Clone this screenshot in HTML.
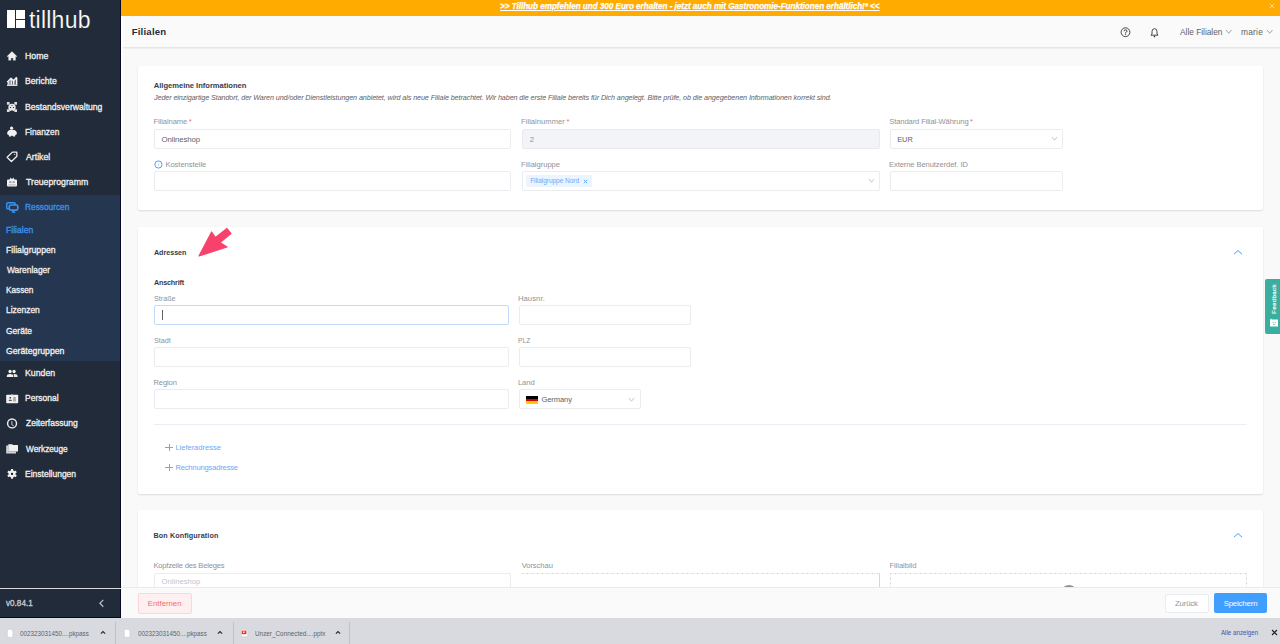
<!DOCTYPE html>
<html><head><meta charset="utf-8">
<style>
*{box-sizing:border-box;margin:0;padding:0}
html,body{width:1280px;height:644px;overflow:hidden;background:#f9f9f9;font-family:"Liberation Sans",sans-serif;position:relative}
.a{position:absolute}
.t{position:absolute;line-height:1;white-space:nowrap}
svg.a{overflow:visible}
</style></head><body>
<div class="a" style="left:0px;top:0px;width:121px;height:618px;background:#222b39"></div>
<div class="a" style="left:120px;top:0px;width:1px;height:618px;background:#050a22"></div>
<div class="a" style="left:0px;top:195px;width:120px;height:166px;background:#253750"></div>
<div class="a" style="left:0px;top:588px;width:121px;height:1px;background:#d8dadf"></div>
<div class="a" style="left:0px;top:589px;width:120px;height:28px;background:#222b39"></div>
<div class="a" style="left:0px;top:617px;width:121px;height:1px;background:#050a22"></div>
<div class="a" style="left:121px;top:0px;width:1159px;height:16px;background:#ffab00"></div>
<div class="a" style="left:121px;top:16px;width:1159px;height:31px;background:#fafafa"></div>
<div class="a" style="left:121px;top:47px;width:1159px;height:1px;background:#e6e6e6"></div>
<div class="a" style="left:121px;top:48px;width:1159px;height:1px;background:#efefef"></div>
<div class="a" style="left:121px;top:16px;width:2px;height:602px;background:#fdfdfd"></div>
<div class="a" style="left:7px;top:10px;width:8px;height:18px;background:#fff"></div>
<div class="a" style="left:16px;top:10px;width:8.5px;height:8.75px;background:#fff"></div>
<div class="a" style="left:16px;top:20px;width:8.5px;height:8px;background:#fff"></div>
<div class="t" style="left:28.95px;top:9.00px;font-size:23px;color:#fff;letter-spacing:0.237px;-webkit-text-stroke:0.2px #222b39;">tillhub</div>
<div class="t" style="left:25.13px;top:51.90px;font-size:9.2px;color:#f0f0f0;transform:scaleX(0.9539);transform-origin:0 0;-webkit-text-stroke:0.32px #f0f0f0;">Home</div>
<div class="t" style="left:25.14px;top:76.90px;font-size:9.2px;color:#f0f0f0;transform:scaleX(0.9421);transform-origin:0 0;-webkit-text-stroke:0.32px #f0f0f0;">Berichte</div>
<div class="t" style="left:25.14px;top:102.90px;font-size:9.2px;color:#f0f0f0;transform:scaleX(0.9349);transform-origin:0 0;-webkit-text-stroke:0.32px #f0f0f0;">Bestandsverwaltung</div>
<div class="t" style="left:25.17px;top:127.90px;font-size:9.2px;color:#f0f0f0;transform:scaleX(0.9070);transform-origin:0 0;-webkit-text-stroke:0.32px #f0f0f0;">Finanzen</div>
<div class="t" style="left:25.83px;top:152.90px;font-size:9.2px;color:#f0f0f0;transform:scaleX(0.9508);transform-origin:0 0;-webkit-text-stroke:0.32px #f0f0f0;">Artikel</div>
<div class="t" style="left:25.65px;top:177.90px;font-size:9.2px;color:#f0f0f0;transform:scaleX(0.9491);transform-origin:0 0;-webkit-text-stroke:0.32px #f0f0f0;">Treueprogramm</div>
<div class="t" style="left:25.17px;top:202.90px;font-size:9.2px;color:#3a93ee;transform:scaleX(0.9049);transform-origin:0 0;-webkit-text-stroke:0.32px #3a93ee;">Ressourcen</div>
<div class="t" style="left:6.04px;top:225.90px;font-size:9.2px;color:#3a93ee;transform:scaleX(0.9355);transform-origin:0 0;-webkit-text-stroke:0.32px #3a93ee;">Filialen</div>
<div class="t" style="left:6.04px;top:245.90px;font-size:9.2px;color:#f0f0f0;transform:scaleX(0.9430);transform-origin:0 0;-webkit-text-stroke:0.32px #f0f0f0;">Filialgruppen</div>
<div class="t" style="left:6.71px;top:265.90px;font-size:9.2px;color:#f0f0f0;transform:scaleX(0.9124);transform-origin:0 0;-webkit-text-stroke:0.32px #f0f0f0;">Warenlager</div>
<div class="t" style="left:6.08px;top:285.90px;font-size:9.2px;color:#f0f0f0;transform:scaleX(0.8932);transform-origin:0 0;-webkit-text-stroke:0.32px #f0f0f0;">Kassen</div>
<div class="t" style="left:6.06px;top:305.90px;font-size:9.2px;color:#f0f0f0;transform:scaleX(0.9190);transform-origin:0 0;-webkit-text-stroke:0.32px #f0f0f0;">Lizenzen</div>
<div class="t" style="left:6.32px;top:326.90px;font-size:9.2px;color:#f0f0f0;transform:scaleX(0.9246);transform-origin:0 0;-webkit-text-stroke:0.32px #f0f0f0;">Geräte</div>
<div class="t" style="left:6.31px;top:346.90px;font-size:9.2px;color:#f0f0f0;transform:scaleX(0.9453);transform-origin:0 0;-webkit-text-stroke:0.32px #f0f0f0;">Gerätegruppen</div>
<div class="t" style="left:25.33px;top:368.90px;font-size:9.2px;color:#f0f0f0;transform:scaleX(0.9517);transform-origin:0 0;-webkit-text-stroke:0.32px #f0f0f0;">Kunden</div>
<div class="t" style="left:25.35px;top:393.90px;font-size:9.2px;color:#f0f0f0;transform:scaleX(0.9244);transform-origin:0 0;-webkit-text-stroke:0.32px #f0f0f0;">Personal</div>
<div class="t" style="left:25.78px;top:418.90px;font-size:9.2px;color:#f0f0f0;transform:scaleX(0.9279);transform-origin:0 0;-webkit-text-stroke:0.32px #f0f0f0;">Zeiterfassung</div>
<div class="t" style="left:26.01px;top:444.90px;font-size:9.2px;color:#f0f0f0;transform:scaleX(0.8995);transform-origin:0 0;-webkit-text-stroke:0.32px #f0f0f0;">Werkzeuge</div>
<div class="t" style="left:25.35px;top:469.90px;font-size:9.2px;color:#f0f0f0;transform:scaleX(0.9260);transform-origin:0 0;-webkit-text-stroke:0.32px #f0f0f0;">Einstellungen</div>
<div class="t" style="left:5.82px;top:599.20px;font-size:8.6px;color:#c9cdd3;transform:scaleX(0.9474);transform-origin:0 0;-webkit-text-stroke:0.32px #c9cdd3;">v0.84.1</div>
<div class="t" style="left:131.66px;top:27.20px;font-size:9.6px;color:#1f2d3d;font-weight:bold;letter-spacing:0.209px;">Filialen</div>
<div class="t" style="left:1180.08px;top:28.30px;font-size:8.4px;color:#606266;letter-spacing:-0.041px;">Alle Filialen</div>
<div class="t" style="left:1240.94px;top:28.30px;font-size:8.4px;color:#606266;letter-spacing:0.232px;">marie</div>
<div class="t" style="left:500.10px;top:2.90px;font-size:8.2px;color:#fff;font-weight:bold;font-style:italic;letter-spacing:-0.063px;text-decoration:underline;-webkit-text-stroke:0.25px #fff;text-underline-offset:1px;">&gt;&gt; Tillhub empfehlen und 300 Euro erhalten - jetzt auch mit Gastronomie-Funktionen erhältlich!* &lt;&lt;</div>
<div class="a" style="left:138px;top:66px;width:1125px;height:144px;background:#fff;border-radius:2px;box-shadow:0 1px 2px rgba(0,0,0,0.12)"></div>
<div class="a" style="left:138px;top:227px;width:1125px;height:267px;background:#fff;border-radius:2px;box-shadow:0 1px 2px rgba(0,0,0,0.12)"></div>
<div class="a" style="left:138px;top:510px;width:1125px;height:120px;background:#fff;border-radius:2px;box-shadow:0 1px 2px rgba(0,0,0,0.12)"></div>
<div class="t" style="left:153.81px;top:82.20px;font-size:7.6px;color:#353d4b;font-weight:bold;letter-spacing:-0.029px;">Allgemeine Informationen</div>
<div class="t" style="left:154.02px;top:94.40px;font-size:7.2px;color:#606266;font-style:italic;letter-spacing:-0.091px;">Jeder einzigartige Standort, der Waren und/oder Dienstleistungen anbietet, wird als neue Filiale betrachtet. Wir haben die erste Filiale bereits für Dich angelegt. Bitte prüfe, ob die angegebenen Informationen korrekt sind.</div>
<div class="t" style="left:153.38px;top:118.20px;font-size:7.6px;color:#8f9298;letter-spacing:-0.075px;">Filialname</div>
<div class="t" style="left:188.78px;top:118.20px;font-size:7.6px;color:#f56c6c;">*</div>
<div class="a" style="left:154px;top:129px;width:357px;height:20px;background:#fff;border:1px solid #eaecf0;border-radius:2px"></div>
<div class="t" style="left:161.53px;top:136.10px;font-size:7.8px;color:#606266;letter-spacing:-0.085px;">Onlineshop</div>
<div class="t" style="left:521.08px;top:118.20px;font-size:7.6px;color:#8f9298;letter-spacing:0.023px;">Filialnummer</div>
<div class="t" style="left:566.58px;top:118.20px;font-size:7.6px;color:#f56c6c;">*</div>
<div class="a" style="left:522px;top:129px;width:358px;height:20px;background:#f2f4f8;border:1px solid #e8eaef;border-radius:2px"></div>
<div class="t" style="left:529.71px;top:136.10px;font-size:7.8px;color:#8f9298;">2</div>
<div class="t" style="left:889.25px;top:118.20px;font-size:7.6px;color:#8f9298;letter-spacing:-0.110px;">Standard Filial-Währung</div>
<div class="t" style="left:970.08px;top:118.20px;font-size:7.6px;color:#f56c6c;">*</div>
<div class="a" style="left:890px;top:129px;width:173px;height:20px;background:#fff;border:1px solid #eaecf0;border-radius:2px"></div>
<div class="t" style="left:897.19px;top:136.30px;font-size:7.4px;color:#606266;">EUR</div>
<svg class="a" style="left:153.5px;top:159.5px" width="9" height="9" viewBox="0 0 9 9"><circle cx="4.45" cy="4.5" r="3.6" fill="none" stroke="#3f9bfd" stroke-width="0.95"/><rect x="4.05" y="3.9" width="0.8" height="2.3" fill="#a9cffa"/><rect x="4.05" y="2.6" width="0.8" height="0.7" fill="#c5ddfb"/></svg>
<div class="t" style="left:165.38px;top:161.20px;font-size:7.6px;color:#8f9298;letter-spacing:-0.040px;">Kostenstelle</div>
<div class="a" style="left:154px;top:171px;width:357px;height:20px;background:#fff;border:1px solid #eaecf0;border-radius:2px"></div>
<div class="t" style="left:521.08px;top:161.20px;font-size:7.6px;color:#8f9298;letter-spacing:-0.030px;">Filialgruppe</div>
<div class="a" style="left:522px;top:171px;width:358px;height:20px;background:#fff;border:1px solid #eaecf0;border-radius:2px"></div>
<div class="a" style="left:526px;top:175px;width:66px;height:12px;background:#ecf5ff;border-radius:2px"></div>
<div class="t" style="left:530.16px;top:177.70px;font-size:6.6px;color:#6aaaf8;letter-spacing:-0.081px;">Filialgruppe Nord</div>
<div class="t" style="left:888.98px;top:161.20px;font-size:7.6px;color:#8f9298;letter-spacing:-0.097px;">Externe Benutzerdef. ID</div>
<div class="a" style="left:890px;top:171px;width:173px;height:20px;background:#fff;border:1px solid #eaecf0;border-radius:2px"></div>
<div class="t" style="left:153.92px;top:249.40px;font-size:7.2px;color:#353d4b;font-weight:bold;letter-spacing:-0.027px;">Adressen</div>
<div class="t" style="left:153.92px;top:279.40px;font-size:7.2px;color:#353d4b;font-weight:bold;letter-spacing:-0.167px;">Anschrift</div>
<div class="t" style="left:153.67px;top:295.20px;font-size:7.6px;color:#8f9298;transform:scaleX(0.9492);transform-origin:0 0;">Straße</div>
<div class="a" style="left:154px;top:305px;width:355px;height:20px;background:#fff;border:1px solid #c3dbfb;border-radius:2px"></div>
<div class="a" style="left:162px;top:310px;width:0.8px;height:10px;background:#606266"></div>
<div class="t" style="left:517.88px;top:295.20px;font-size:7.6px;color:#8f9298;letter-spacing:0.121px;">Hausnr.</div>
<div class="a" style="left:518.5px;top:305px;width:172.5px;height:20px;background:#fff;border:1px solid #eaecf0;border-radius:2px"></div>
<div class="t" style="left:153.67px;top:337.20px;font-size:7.6px;color:#8f9298;transform:scaleX(0.9513);transform-origin:0 0;">Stadt</div>
<div class="a" style="left:154px;top:347px;width:355px;height:20px;background:#fff;border:1px solid #eaecf0;border-radius:2px"></div>
<div class="t" style="left:517.95px;top:337.20px;font-size:7.6px;color:#8f9298;transform:scaleX(0.8794);transform-origin:0 0;">PLZ</div>
<div class="a" style="left:518.5px;top:347px;width:172.5px;height:20px;background:#fff;border:1px solid #eaecf0;border-radius:2px"></div>
<div class="t" style="left:153.38px;top:379.20px;font-size:7.6px;color:#8f9298;letter-spacing:-0.093px;">Region</div>
<div class="a" style="left:154px;top:389px;width:355px;height:20px;background:#fff;border:1px solid #eaecf0;border-radius:2px"></div>
<div class="t" style="left:517.88px;top:379.20px;font-size:7.6px;color:#8f9298;">Land</div>
<div class="a" style="left:518.5px;top:389px;width:122.5px;height:20px;background:#fff;border:1px solid #eaecf0;border-radius:2px"></div>
<div class="a" style="left:526px;top:396px;width:11.6px;height:2.7px;background:#000"></div>
<div class="a" style="left:526px;top:398.7px;width:11.6px;height:2.7px;background:#dd0000"></div>
<div class="a" style="left:526px;top:401.4px;width:11.6px;height:2.7px;background:#ffce00"></div>
<div class="t" style="left:541.42px;top:396.20px;font-size:7.6px;color:#606266;letter-spacing:-0.109px;">Germany</div>
<div class="a" style="left:154px;top:424px;width:1093px;height:1px;background:#ebeef5"></div>
<div class="t" style="left:175.38px;top:444.20px;font-size:7.6px;color:#6ea8f7;letter-spacing:-0.041px;">Lieferadresse</div>
<div class="t" style="left:175.38px;top:464.20px;font-size:7.6px;color:#6ea8f7;letter-spacing:-0.182px;">Rechnungsadresse</div>
<div class="a" style="left:165.3px;top:447.1px;width:7.5px;height:0.8px;background:#6ea8f7"></div>
<div class="a" style="left:168.65px;top:443.75px;width:0.8px;height:7.5px;background:#6ea8f7"></div>
<div class="a" style="left:165.3px;top:467.1px;width:7.5px;height:0.8px;background:#6ea8f7"></div>
<div class="a" style="left:168.65px;top:463.75px;width:0.8px;height:7.5px;background:#6ea8f7"></div>
<div class="t" style="left:153.52px;top:532.40px;font-size:7.2px;color:#353d4b;font-weight:bold;letter-spacing:0.109px;">Bon Konfiguration</div>
<div class="t" style="left:153.38px;top:562.20px;font-size:7.6px;color:#8f9298;letter-spacing:-0.195px;">Kopfzeile des Beleges</div>
<div class="a" style="left:154px;top:573px;width:357px;height:20px;background:#fff;border:1px solid #eaecf0;border-radius:2px"></div>
<div class="t" style="left:161.54px;top:578.20px;font-size:7.6px;color:#c0c4cc;letter-spacing:0.026px;">Onlineshop</div>
<div class="t" style="left:521.67px;top:562.20px;font-size:7.6px;color:#8f9298;letter-spacing:-0.064px;">Vorschau</div>
<div class="a" style="left:522px;top:573px;width:358px;height:30px;background:repeating-linear-gradient(90deg,#c9ccd2 0 1px,#eef0f3 1px 5px) top/100% 1px no-repeat;border-right:1px solid #d4d6da"></div>
<div class="t" style="left:889.38px;top:562.20px;font-size:7.6px;color:#8f9298;letter-spacing:-0.038px;">Filialbild</div>
<div class="a" style="left:890px;top:573px;width:357px;height:30px;background:repeating-linear-gradient(90deg,#c9ccd2 0 1px,#eef0f3 1px 5px) top/100% 1px no-repeat,repeating-linear-gradient(180deg,#c9ccd2 0 1px,#eef0f3 1px 5px) left/1px 100% no-repeat,repeating-linear-gradient(180deg,#c9ccd2 0 1px,#eef0f3 1px 5px) right/1px 100% no-repeat"></div>
<div class="a" style="left:1059.5px;top:585.2px;width:18px;height:18px;background:#8e9196;border-radius:50%"></div>
<svg class="a" style="left:1233px;top:248.6px" width="10" height="7" viewBox="0 0 10 7"><path d="M1 5.2 L5 1.5 L9 5.2" fill="none" stroke="#409eff" stroke-width="1"/></svg>
<svg class="a" style="left:1233px;top:532px" width="10" height="7" viewBox="0 0 10 7"><path d="M1 5.2 L5 1.5 L9 5.2" fill="none" stroke="#409eff" stroke-width="1"/></svg>
<svg class="a" style="left:190px;top:222px" width="50" height="40" viewBox="190 222 50 40"><path d="M199 256 L211.6 232 L215.5 237.5 L227 228.5 L231 233.5 L220 242.6 L227 247 Z" fill="#f8416b" stroke="#f8416b" stroke-width="1.2" stroke-linejoin="round"/></svg>
<div class="a" style="left:1264.8px;top:279px;width:15.2px;height:54.5px;background:#3aafa0;border-radius:2px 0 0 2px"></div>
<div class="a" style="left:1270px;top:313.8px;width:29px;height:8px;transform:rotate(-90deg);transform-origin:0 0;font-size:6.2px;line-height:8px;color:#fff;white-space:nowrap;letter-spacing:0.35px;-webkit-text-stroke:0.15px #fff">Feedback</div>
<svg class="a" style="left:1268.5px;top:317.6px" width="10" height="9" viewBox="0 0 10 9"><path d="M1 1.5 L2.5 0.5 L2.5 1.5 L9 1.5 L9 8.5 L1 8.5 Z" fill="#fff"/><circle cx="4" cy="4.6" r="0.5" fill="#3aafa0"/><circle cx="6.2" cy="4.6" r="0.5" fill="#3aafa0"/><path d="M3.8 6.2 Q5.1 7.2 6.4 6.2" stroke="#3aafa0" stroke-width="0.6" fill="none"/></svg>
<div class="a" style="left:121px;top:587px;width:1159px;height:31px;background:#fafafa;border-top:1px solid #ebebeb"></div>
<div class="a" style="left:138px;top:593px;width:54px;height:20.5px;background:#fef0f0;border:1px solid #fcd6d6;border-radius:2px"></div>
<div class="t" style="left:147.86px;top:600.10px;font-size:7.8px;color:#f56c6c;letter-spacing:-0.022px;">Entfernen</div>
<div class="a" style="left:1165px;top:593.5px;width:43.5px;height:19.5px;background:#fff;border:1px solid #eaecf0;border-radius:2px"></div>
<div class="t" style="left:1174.95px;top:600.10px;font-size:7.8px;color:#8f9298;letter-spacing:-0.160px;">Zurück</div>
<div class="a" style="left:1214px;top:593.3px;width:53px;height:19.7px;background:#409eff;border-radius:2px"></div>
<div class="t" style="left:1223.65px;top:600.10px;font-size:7.8px;color:#fff;letter-spacing:-0.158px;">Speichern</div>
<div class="a" style="left:0px;top:618px;width:1280px;height:26px;background:#d9dadf"></div>
<div class="a" style="left:114.7px;top:622px;width:0.8px;height:22px;background:#bfc1c6"></div>
<div class="a" style="left:232.5px;top:622px;width:0.8px;height:22px;background:#bfc1c6"></div>
<div class="a" style="left:349.4px;top:622px;width:0.8px;height:22px;background:#bfc1c6"></div>
<div class="t" style="left:20.35px;top:630.40px;font-size:7.2px;color:#5f6368;transform:scaleX(0.8746);transform-origin:0 0;">002323031450....pkpass</div>
<div class="t" style="left:137.55px;top:630.40px;font-size:7.2px;color:#5f6368;transform:scaleX(0.8746);transform-origin:0 0;">002323031450....pkpass</div>
<div class="t" style="left:254.51px;top:630.40px;font-size:7.2px;color:#5f6368;transform:scaleX(0.8859);transform-origin:0 0;">Unzer_Connected....pptx</div>
<svg class="a" style="left:7.1px;top:628.8px" width="6.2" height="8.6" viewBox="0 0 6.2 8.6"><path d="M0.3 0.3 L4.2 0.3 L5.9 2 L5.9 8.3 L0.3 8.3 Z" fill="#fff" stroke="#c4c5c9" stroke-width="0.5"/></svg>
<svg class="a" style="left:124.2px;top:628.8px" width="6.2" height="8.6" viewBox="0 0 6.2 8.6"><path d="M0.3 0.3 L4.2 0.3 L5.9 2 L5.9 8.3 L0.3 8.3 Z" fill="#fff" stroke="#c4c5c9" stroke-width="0.5"/></svg>
<svg class="a" style="left:241px;top:628.5px" width="7" height="8" viewBox="0 0 7 8"><path d="M0.3 0.3 L5 0.3 L6.7 2 L6.7 7.7 L0.3 7.7 Z" fill="#fff" stroke="#c4c5c9" stroke-width="0.5"/><rect x="0.8" y="1.6" width="4.6" height="3.6" fill="#e2352b"/><rect x="2" y="2.5" width="1.6" height="1.4" fill="#fff"/></svg>
<svg class="a" style="left:100.2px;top:630.2px" width="6" height="5" viewBox="0 0 6 5"><path d="M0.9 3.7 L3 1.6 L5.1 3.7" fill="none" stroke="#2a2a2a" stroke-width="1.2"/></svg>
<svg class="a" style="left:217.2px;top:630.2px" width="6" height="5" viewBox="0 0 6 5"><path d="M0.9 3.7 L3 1.6 L5.1 3.7" fill="none" stroke="#2a2a2a" stroke-width="1.2"/></svg>
<svg class="a" style="left:334.5px;top:630.2px" width="6" height="5" viewBox="0 0 6 5"><path d="M0.9 3.7 L3 1.6 L5.1 3.7" fill="none" stroke="#2a2a2a" stroke-width="1.2"/></svg>
<div class="t" style="left:1220.69px;top:629.70px;font-size:6.6px;color:#3a56b0;transform:scaleX(0.9365);transform-origin:0 0;">Alle anzeigen</div>
<svg class="a" style="left:1271px;top:629px" width="7" height="7" viewBox="0 0 7 7"><path d="M1 1 L6 6 M6 1 L1 6" stroke="#222" stroke-width="1.1"/></svg>
<svg class="a" style="left:1051.00px;top:136.40px" width="7.00" height="5.20" viewBox="0 0 7.00 5.20"><path d="M1 1 L3.50 4.20 L6.00 1" fill="none" stroke="#b4b8bf" stroke-width="0.8"/></svg>
<svg class="a" style="left:868.00px;top:178.40px" width="7.00" height="5.20" viewBox="0 0 7.00 5.20"><path d="M1 1 L3.50 4.20 L6.00 1" fill="none" stroke="#b4b8bf" stroke-width="0.8"/></svg>
<svg class="a" style="left:628.30px;top:396.60px" width="7.00" height="5.20" viewBox="0 0 7.00 5.20"><path d="M1 1 L3.50 4.20 L6.00 1" fill="none" stroke="#b4b8bf" stroke-width="0.8"/></svg>
<svg class="a" style="left:1225.05px;top:29.45px" width="7.50" height="5.30" viewBox="0 0 7.50 5.30"><path d="M1 1 L3.75 4.30 L6.50 1" fill="none" stroke="#8a8d93" stroke-width="0.8"/></svg>
<svg class="a" style="left:1265.55px;top:29.45px" width="7.50" height="5.30" viewBox="0 0 7.50 5.30"><path d="M1 1 L3.75 4.30 L6.50 1" fill="none" stroke="#8a8d93" stroke-width="0.8"/></svg>
<svg class="a" style="left:583px;top:179px" width="5" height="5" viewBox="0 0 5 5"><path d="M0.8 0.8 L4.2 4.2 M4.2 0.8 L0.8 4.2" stroke="#409eff" stroke-width="0.8"/></svg>
<svg class="a" style="left:1268.5px;top:3px" width="6" height="6" viewBox="0 0 6 6"><path d="M0.7 0.7 L5.3 5.3 M5.3 0.7 L0.7 5.3" stroke="#ffe2a8" stroke-width="0.9"/></svg>
<svg class="a" style="left:98px;top:599px" width="7" height="9" viewBox="0 0 7 9"><path d="M5.3 0.9 L1.9 4.3 L5.3 7.7" fill="none" stroke="#b8bcc4" stroke-width="1.25"/></svg>
<svg class="a" style="left:1120px;top:27px" width="11" height="11" viewBox="0 0 11 11"><circle cx="5.5" cy="5.2" r="4.4" fill="none" stroke="#333" stroke-width="0.9"/><path d="M4 4.2 Q4 2.8 5.5 2.8 Q7 2.8 7 4.1 Q7 5 5.6 5.6 L5.6 6.6" fill="none" stroke="#333" stroke-width="0.9"/><rect x="5.1" y="7.2" width="0.9" height="0.9" fill="#333"/></svg>
<svg class="a" style="left:1149px;top:27px" width="11" height="11" viewBox="0 0 11 11"><path d="M2 8.2 L9 8.2 L8 7 L8 4.6 Q8 1.8 5.5 1.6 Q3 1.8 3 4.6 L3 7 Z" fill="none" stroke="#333" stroke-width="0.9" stroke-linejoin="round"/><circle cx="5.5" cy="9.6" r="0.8" fill="#333"/></svg>
<svg class="a" style="left:4px;top:48px" width="16" height="16" viewBox="0 0 16 16"><path d="M7.95 3.6 L13.1 8.5 L11.5 8.5 L11.5 12.3 L9.2 12.3 L9.2 9.9 L6.9 9.9 L6.9 12.3 L4.6 12.3 L4.6 8.5 L2.9 8.5 Z" fill="#f0f0f0" stroke="#f0f0f0" stroke-width="0.3" stroke-linejoin="round"/></svg>
<svg class="a" style="left:4px;top:74px" width="16" height="16" viewBox="0 0 16 16"><rect x="3" y="10.5" width="10.4" height="1.4" fill="#f0f0f0"/><path d="M3.2 8.2 L7 4.4 L9.6 6.8 L12.7 3.3" fill="none" stroke="#f0f0f0" stroke-width="1.5" stroke-linejoin="round"/><path d="M3.2 8.2 L7 4.4 L9.6 6.8 L12.7 3.3 L13.3 3.3 L13.3 10.6 L3 10.6 Z" fill="#f0f0f0" opacity="0.35"/><rect x="4.2" y="7.6" width="1.3" height="3" fill="#f0f0f0"/><rect x="6.6" y="5" width="1.3" height="5.6" fill="#f0f0f0"/><rect x="9" y="6.5" width="1.3" height="4.1" fill="#f0f0f0"/><rect x="12" y="4" width="1.3" height="6.6" fill="#f0f0f0"/></svg>
<svg class="a" style="left:4px;top:99px" width="16" height="16" viewBox="0 0 16 16"><rect x="2.9" y="3" width="2.7" height="2.7" fill="#dcdcdc"/><rect x="10.3" y="3" width="2.7" height="2.7" fill="#dcdcdc"/><rect x="2.9" y="10.3" width="2.7" height="2.7" fill="#dcdcdc"/><rect x="10.3" y="10.3" width="2.7" height="2.7" fill="#dcdcdc"/><circle cx="8" cy="8.4" r="3.7" fill="#e8e8e8"/><circle cx="6.5" cy="8.5" r="0.6" fill="#111"/><circle cx="9.5" cy="8.5" r="0.6" fill="#111"/><ellipse cx="8" cy="6.3" rx="0.8" ry="0.45" fill="#222b39"/><path d="M6.6 12.3 Q8 11.2 9.4 12.3" fill="none" stroke="#222b39" stroke-width="0.8"/></svg>
<svg class="a" style="left:4px;top:124px" width="16" height="16" viewBox="0 0 16 16"><circle cx="7.6" cy="4.2" r="1.6" fill="#f0f0f0"/><path d="M5.4 6 L10.6 6 Q12.6 7 13 9.2 Q12.6 10.6 11.3 11.1 L11.1 12.6 L9 12.6 L8.7 11.8 L7.3 11.8 L7 12.6 L5 12.6 L4.8 11.1 Q3.4 10.6 3 9.4 Q3.4 7 5.4 6 Z" fill="#f0f0f0"/></svg>
<svg class="a" style="left:4px;top:148px" width="16" height="16" viewBox="0 0 16 16"><path d="M8.4 4.1 L12.8 4.1 L12.9 8.3 L7.4 13.5 L3.1 9.3 Z" fill="none" stroke="#f0f0f0" stroke-width="1.3" stroke-linejoin="round"/><circle cx="10.7" cy="6.3" r="0.6" fill="#f0f0f0"/></svg>
<svg class="a" style="left:4px;top:174px" width="16" height="16" viewBox="0 0 16 16"><path d="M3 6.6 Q3 5.6 4 5.6 L5.6 5.6 L6.6 3.4 L7.5 4.8 L8.5 4.8 L9.4 3.4 L10.4 5.6 L12 5.6 Q13 5.6 13 6.6 L13 11.6 Q13 12.6 12 12.6 L4 12.6 Q3 12.6 3 11.6 Z" fill="#f0f0f0"/><path d="M5.2 8.5 L6.1 7 L6.9 8.5 Z M7.4 8.6 L8 7.6 L8.6 8.6 Z M9.1 8.5 L9.9 7 L10.8 8.5 Z" fill="#222b39"/><rect x="4.4" y="10.1" width="7.2" height="1.5" fill="#c8c8c8"/></svg>
<svg class="a" style="left:4px;top:198px" width="18" height="18" viewBox="0 0 18 18"><rect x="2.7" y="4.7" width="8.6" height="6.2" rx="1.5" fill="none" stroke="#3a93ee" stroke-width="1.4"/><rect x="5.3" y="7" width="8.5" height="5.1" rx="1.5" fill="#253750" stroke="#3a93ee" stroke-width="1.7"/><path d="M7.3 14.8 L9.5 12 L11.7 14.8 Z" fill="#3a93ee"/></svg>
<svg class="a" style="left:4px;top:365px" width="16" height="16" viewBox="0 0 16 16"><circle cx="6.05" cy="6.5" r="1.65" fill="#f0f0f0"/><circle cx="10.05" cy="6.5" r="1.65" fill="#f0f0f0"/><path d="M2.8 12.1 L2.8 11 Q2.8 8.9 6 8.9 Q9.3 8.9 9.3 11 L9.3 12.1 Z" fill="#f0f0f0"/><path d="M9.9 12.1 L9.9 11 Q9.9 9.6 9.5 9.1 Q10 9 10.6 9 Q13.5 9 13.5 11 L13.5 12.1 Z" fill="#e6e6e6"/></svg>
<svg class="a" style="left:4px;top:390px" width="16" height="16" viewBox="0 0 16 16"><rect x="2.2" y="4.8" width="12" height="8.4" rx="0.8" fill="#f0f0f0"/><rect x="7.3" y="4" width="1.4" height="1.6" rx="0.5" fill="#bbb"/><rect x="5.5" y="7" width="1.5" height="1.6" fill="#444"/><rect x="4.8" y="9.8" width="3" height="1" fill="#333"/><rect x="9.2" y="7" width="2.6" height="4.5" fill="#a8a8a8"/></svg>
<svg class="a" style="left:4px;top:415px" width="16" height="16" viewBox="0 0 16 16"><circle cx="8.05" cy="8.45" r="4.45" fill="none" stroke="#f0f0f0" stroke-width="1.4"/><path d="M7.9 6 L7.9 9.9 L9.7 10.7" fill="none" stroke="#c8c8c8" stroke-width="1"/></svg>
<svg class="a" style="left:4px;top:440px" width="16" height="16" viewBox="0 0 16 16"><path d="M2.2 5.6 L4.4 5.6 L4.4 11.6 L12 11.6 L12 13.5 L2.2 13.5 Z" fill="#d4d4d4"/><path d="M4.3 4.3 L8.4 4.3 L8.9 5 L14 5 L14 11.5 L4.3 11.5 Z" fill="#f0f0f0"/></svg>
<svg class="a" style="left:4px;top:465px" width="16" height="16" viewBox="0 0 16 16"><path d="M7.09 5.33 L6.96 4.02 L9.14 4.02 L9.01 5.33 L10.67 6.28 L11.73 5.52 L12.82 7.41 L11.62 7.94 L11.62 9.86 L12.82 10.39 L11.73 12.28 L10.67 11.52 L9.01 12.47 L9.14 13.78 L6.96 13.78 L7.09 12.47 L5.43 11.52 L4.37 12.28 L3.28 10.39 L4.48 9.86 L4.48 7.94 L3.28 7.41 L4.37 5.52 L5.43 6.28 Z" fill="#f0f0f0"/><circle cx="8.05" cy="8.9" r="1.05" fill="#000"/></svg>
</body></html>
